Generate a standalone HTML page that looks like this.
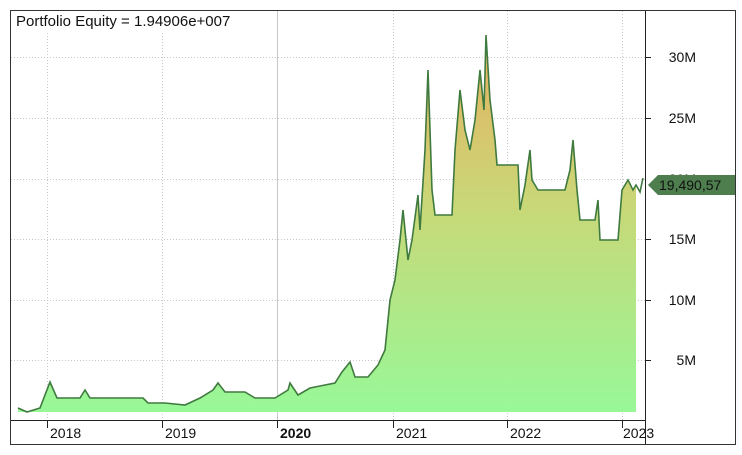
<!DOCTYPE html>
<html><head><style>
body{margin:0;background:#fff;width:742px;height:455px;overflow:hidden;font-family:"Liberation Sans",sans-serif;}
</style></head><body>
<svg width="742" height="455" xmlns="http://www.w3.org/2000/svg" style="position:absolute;left:0;top:0">
<defs>
<linearGradient id="g" gradientUnits="userSpaceOnUse" x1="0" y1="40" x2="0" y2="412">
<stop offset="0" stop-color="#e8b060"/>
<stop offset="0.45" stop-color="#c8d878"/>
<stop offset="1" stop-color="#98f898"/>
</linearGradient>
</defs>
<rect x="10.5" y="10.5" width="725" height="434" fill="#fff" stroke="#333"/>
<g stroke="#c8c8c8" stroke-dasharray="1,2" stroke-width="1">
<line x1="11" y1="57.5" x2="645" y2="57.5"/><line x1="11" y1="118.5" x2="645" y2="118.5"/>
<line x1="11" y1="179.5" x2="645" y2="179.5"/><line x1="11" y1="239.5" x2="645" y2="239.5"/>
<line x1="11" y1="300.5" x2="645" y2="300.5"/><line x1="11" y1="360.5" x2="645" y2="360.5"/>
<line x1="47.5" y1="33" x2="47.5" y2="420"/><line x1="162.5" y1="33" x2="162.5" y2="420"/>
<line x1="393.5" y1="11" x2="393.5" y2="420"/><line x1="507.5" y1="11" x2="507.5" y2="420"/>
<line x1="622.5" y1="11" x2="622.5" y2="420"/>
</g>
<line x1="277.5" y1="11" x2="277.5" y2="420" stroke="#c8c8c8"/>
<polygon fill="url(#g)" points="18,408 27,412 40,408 50,382 57,398 80,398 85,390 90,398 143,398 148,403 165,403 185,405 200,398 213,390 218,383 225,392 245,392 255,398 275,398 288,390 290,383 298,395 310,388 325,385 335,383 342,372 350,362 355,377 368,377 378,365 385,350 390,300 395,280 400,240 403,210 408,260 412,240 418,195 420,230 425,150 428,70 432,190 435,215 452,215 455,150 460,90 465,130 470,150 475,120 480,70 484,110 486,35 490,100 495,140 497,165 518,165 520,210 525,185 530,150 532,180 538,190 565,190 570,170 573,140 577,190 580,220 595,220 598,200 600,240 618,240 622,190 628,180 633,190 636,185 636,412 18,412"/>
<polyline fill="none" stroke="#3f7a3f" stroke-width="1.6" points="18,408 27,412 40,408 50,382 57,398 80,398 85,390 90,398 143,398 148,403 165,403 185,405 200,398 213,390 218,383 225,392 245,392 255,398 275,398 288,390 290,383 298,395 310,388 325,385 335,383 342,372 350,362 355,377 368,377 378,365 385,350 390,300 395,280 400,240 403,210 408,260 412,240 418,195 420,230 425,150 428,70 432,190 435,215 452,215 455,150 460,90 465,130 470,150 475,120 480,70 484,110 486,35 490,100 495,140 497,165 518,165 520,210 525,185 530,150 532,180 538,190 565,190 570,170 573,140 577,190 580,220 595,220 598,200 600,240 618,240 622,190 628,180 633,190 636,185 640,192 643,178"/>
<line x1="645.5" y1="11" x2="645.5" y2="445" stroke="#222"/>
<line x1="11" y1="420.5" x2="645" y2="420.5" stroke="#222"/>
<g stroke="#222"><line x1="645" y1="57.5" x2="651" y2="57.5"/><line x1="645" y1="118.5" x2="651" y2="118.5"/><line x1="645" y1="239.5" x2="651" y2="239.5"/><line x1="645" y1="300.5" x2="651" y2="300.5"/><line x1="645" y1="360.5" x2="651" y2="360.5"/>
<line x1="47.5" y1="420" x2="47.5" y2="428"/><line x1="162.5" y1="420" x2="162.5" y2="428"/><line x1="277.5" y1="420" x2="277.5" y2="428"/><line x1="393.5" y1="420" x2="393.5" y2="428"/><line x1="507.5" y1="420" x2="507.5" y2="428"/><line x1="622.5" y1="420" x2="622.5" y2="428"/></g>
<g font-size="14" fill="#111" text-anchor="end">
<text x="696" y="62">30M</text><text x="696" y="123">25M</text><text x="696" y="184">20M</text><text x="696" y="244">15M</text><text x="696" y="305">10M</text><text x="696" y="365">5M</text>
</g>
<polygon points="648,185 658,175 742,175 742,195 658,195" fill="#4e7e4e"/>
<text x="659" y="190" font-size="14" fill="#111">19,490,57</text>
<rect x="736" y="170" width="6" height="30" fill="#fff"/>
<line x1="735.5" y1="10" x2="735.5" y2="445" stroke="#333"/>
<g font-size="14" fill="#111">
<text x="50" y="438">2018</text><text x="165" y="438">2019</text><text x="280" y="438" font-weight="bold">2020</text><text x="396" y="438">2021</text><text x="510" y="438">2022</text><text x="623" y="438">2023</text>
</g>
<rect x="12" y="11" width="258" height="20" fill="#fff"/>
<text x="16" y="26" font-size="15" fill="#111">Portfolio Equity = 1.94906e+007</text>
</svg>
</body></html>
